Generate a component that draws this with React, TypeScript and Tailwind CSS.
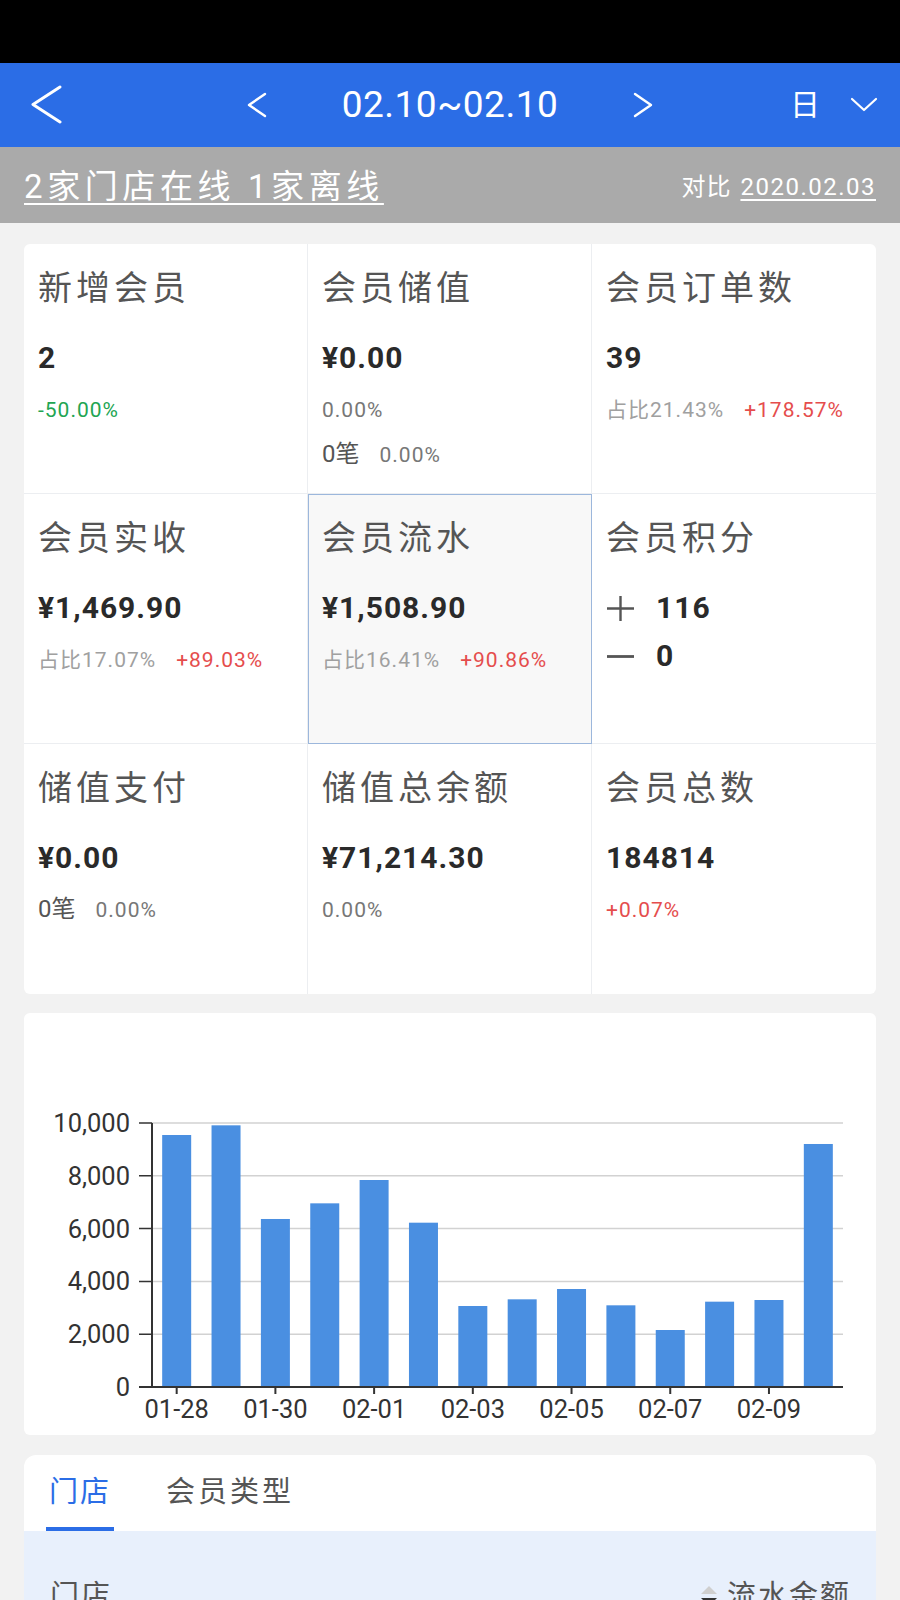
import React from "react";

const bars = [9545, 9912, 6364, 6957, 7841, 6224, 3068, 3321, 3712, 3094, 2159, 3232, 3295, 9205];
const xLabels = ["01-28", "01-30", "02-01", "02-03", "02-05", "02-07", "02-09"];

function PlusIcon() {
  return (
    <svg width="31" height="31" viewBox="0 0 31 31" className="shrink-0">
      <path d="M15.5 3 V28 M2 15.5 H29" stroke="#555" strokeWidth="2.4" fill="none" />
    </svg>
  );
}

function MinusIcon() {
  return (
    <svg width="31" height="31" viewBox="0 0 31 31" className="shrink-0">
      <path d="M2 15.5 H29" stroke="#555" strokeWidth="2.8" fill="none" />
    </svg>
  );
}

type CellProps = {
  title: string;
  value?: React.ReactNode;
  children?: React.ReactNode;
  className?: string;
};

function Cell({ title, value, children, className = "" }: CellProps) {
  return (
    <div className={`h-[250px] pt-[24px] pl-[14px] ${className}`}>
      <div className="text-[34px] leading-[40px] tracking-[4px] text-[#555]">{title}</div>
      {value !== undefined && (
        <div className="mt-[32px] text-[30px] leading-[36px] font-bold tracking-[1px] text-[#2a2a2a]">{value}</div>
      )}
      {children}
    </div>
  );
}

function Sub({ children, className = "" }: { children: React.ReactNode; className?: string }) {
  return <div className={`text-[21px] leading-[28px] tracking-[1px] ${className}`}>{children}</div>;
}

function CountLine({ count, pct, className = "" }: { count: string; pct: string; className?: string }) {
  return (
    <div className={`leading-[32px] flex items-baseline ${className}`}>
      <span className="text-[24px] text-[#555]">{count}</span>
      <span className="ml-[20px] text-[21px] tracking-[1px] text-[#777]">{pct}</span>
    </div>
  );
}

function Chart() {
  const x0 = 128;
  const x1 = 819;
  const yBase = 374;
  const yTop = 110;
  const step = (x1 - x0) / bars.length;
  const barW = 29;
  const yOf = (v: number) => yBase - (v / 10000) * (yBase - yTop);
  const ticks = [0, 2000, 4000, 6000, 8000, 10000];
  return (
    <svg width="852" height="422" viewBox="0 0 852 422" className="block">
      {ticks.map((t) => (
        <g key={t}>
          {t !== 0 && <line x1={x0} x2={x1} y1={yOf(t)} y2={yOf(t)} stroke="#d2d2d2" strokeWidth="1.5" />}
          <line x1={115} x2={x0} y1={yOf(t)} y2={yOf(t)} stroke="#333" strokeWidth="1.5" />
          <text
            x={106}
            y={yOf(t) + 9}
            textAnchor="end"
            fontSize="25.5"
            fill="#333"
            fontFamily="Roboto, 'Liberation Sans', sans-serif"
          >
            {t.toLocaleString("en-US")}
          </text>
        </g>
      ))}
      {bars.map((v, i) => {
        const cx = x0 + step * (i + 0.5);
        return <rect key={i} x={cx - barW / 2} y={yOf(v)} width={barW} height={yBase - yOf(v)} fill="#4a8fe1" />;
      })}
      <line x1={x0} x2={x0} y1={yTop} y2={yBase} stroke="#333" strokeWidth="2" />
      <line x1={115} x2={x1} y1={yBase} y2={yBase} stroke="#333" strokeWidth="2" />
      {xLabels.map((l, k) => {
        const cx = x0 + step * (k * 2 + 0.5);
        return (
          <g key={l}>
            <line x1={cx} x2={cx} y1={yBase} y2={yBase + 7} stroke="#333" strokeWidth="2" />
            <text
              x={cx}
              y={405}
              textAnchor="middle"
              fontSize="25.5"
              fill="#333"
              fontFamily="Roboto, 'Liberation Sans', sans-serif"
            >
              {l}
            </text>
          </g>
        );
      })}
    </svg>
  );
}

export default function App() {
  return (
    <div className="min-h-screen bg-[#f2f2f2] font-[Roboto,'Noto_Sans_CJK_SC',sans-serif]">
      <div className="h-[63px] bg-black" />

      <header className="h-[84px] bg-[#2b6de6] flex items-center text-white">
        <svg width="32" height="40" viewBox="0 0 32 40" className="ml-[31px] shrink-0">
          <path d="M29 2 L2 19.5 L29 37" fill="none" stroke="white" strokeWidth="3" strokeLinecap="round" strokeLinejoin="round" />
        </svg>
        <div className="ml-[183px] flex items-center">
          <svg width="22" height="30" viewBox="0 0 22 30" className="shrink-0">
            <path d="M19 4 L3 15 L19 26" fill="none" stroke="white" strokeWidth="2.4" strokeLinecap="round" strokeLinejoin="round" />
          </svg>
          <div className="w-[364px] text-center text-[37px] leading-[44px] tracking-[0.5px]">02.10~02.10</div>
          <svg width="22" height="30" viewBox="0 0 22 30" className="shrink-0">
            <path d="M3 4 L19 15 L3 26" fill="none" stroke="white" strokeWidth="2.4" strokeLinecap="round" strokeLinejoin="round" />
          </svg>
        </div>
        <div className="ml-[136px] text-[30px] leading-[36px]">日</div>
        <svg width="30" height="20" viewBox="0 0 30 20" className="ml-[29px] shrink-0">
          <path d="M3 4 L15 15 L27 4" fill="none" stroke="white" strokeWidth="2.2" strokeLinecap="round" strokeLinejoin="round" />
        </svg>
      </header>

      <div className="h-[76px] bg-[#aaaaaa] px-[24px] pt-[4px] flex items-center justify-between text-white">
        <span className="text-[33px] leading-[40px] tracking-[4.6px] underline underline-offset-[5px] decoration-[2px]">
          2家门店在线 1家离线
        </span>
        <span className="text-[24px] leading-[30px] tracking-[1px]">
          对比{" "}
          <span className="ml-[2px] underline underline-offset-[4px] decoration-[1.5px] tracking-[1.5px]">2020.02.03</span>
        </span>
      </div>

      <main className="px-[24px] pt-[21px] pb-[40px]">
        <section className="bg-white rounded-[6px] grid grid-cols-3 overflow-hidden">
          <Cell title="新增会员" value="2" className="border-r border-b border-[#eceef1]">
            <Sub className="mt-[20px] text-[#22a552]">-50.00%</Sub>
          </Cell>
          <Cell title="会员储值" value="¥0.00" className="border-r border-b border-[#eceef1]">
            <Sub className="mt-[20px] text-[#777]">0.00%</Sub>
            <CountLine count="0笔" pct="0.00%" className="mt-[14px]" />
          </Cell>
          <Cell title="会员订单数" value="39" className="border-b border-[#eceef1]">
            <Sub className="mt-[20px]">
              <span className="text-[#a0a0a0]">占比21.43%</span>
              <span className="ml-[20px] text-[#e54d4d]">+178.57%</span>
            </Sub>
          </Cell>

          <Cell title="会员实收" value="¥1,469.90" className="border-r border-b border-[#eceef1]">
            <Sub className="mt-[20px]">
              <span className="text-[#a0a0a0]">占比17.07%</span>
              <span className="ml-[20px] text-[#e54d4d]">+89.03%</span>
            </Sub>
          </Cell>
          <Cell
            title="会员流水"
            value="¥1,508.90"
            className="bg-[#f8f8f8] shadow-[inset_0_0_0_1px_#9cb7dc]"
          >
            <Sub className="mt-[20px]">
              <span className="text-[#a0a0a0]">占比16.41%</span>
              <span className="ml-[20px] text-[#e54d4d]">+90.86%</span>
            </Sub>
          </Cell>
          <Cell title="会员积分" className="border-b border-[#eceef1]">
            <div className="mt-[32px] h-[36px] flex items-center gap-[20px] -ml-[1px]">
              <PlusIcon />
              <span className="text-[30px] leading-[36px] font-bold tracking-[1px] text-[#2a2a2a]">116</span>
            </div>
            <div className="mt-[12px] h-[36px] flex items-center gap-[20px] -ml-[1px]">
              <MinusIcon />
              <span className="text-[30px] leading-[36px] font-bold text-[#2a2a2a]">0</span>
            </div>
          </Cell>

          <Cell title="储值支付" value="¥0.00" className="border-r border-[#eceef1]">
            <CountLine count="0笔" pct="0.00%" className="mt-[17px]" />
          </Cell>
          <Cell title="储值总余额" value="¥71,214.30" className="border-r border-[#eceef1]">
            <Sub className="mt-[20px] text-[#777]">0.00%</Sub>
          </Cell>
          <Cell title="会员总数" value="184814">
            <Sub className="mt-[20px] text-[#e54d4d]">+0.07%</Sub>
          </Cell>
        </section>

        <section className="mt-[19px] bg-white rounded-[6px] h-[422px] overflow-hidden">
          <Chart />
        </section>

        <section className="mt-[20px] bg-white rounded-t-[12px] overflow-hidden">
          <div className="h-[76px] flex items-stretch pl-[22px]">
            <div className="w-[68px] pt-[4px] flex items-center justify-center border-b-4 border-[#2b6de6] text-[29px] tracking-[2px] text-[#2b6de6]">
              门店
            </div>
            <div className="ml-[52px] flex items-center text-[29px] tracking-[3px] text-[#555]">会员类型</div>
          </div>
          <div className="h-[200px] bg-[#e8f0fc] pl-[26px] pr-[25px] pt-[47px] flex items-start justify-between text-[29px] leading-[36px] tracking-[2px] text-[#555]">
            <span>门店</span>
            <span className="flex items-center">
              <span className="mr-[10px] flex flex-col items-center gap-[4px]">
                <span className="block w-0 h-0 border-x-[8px] border-x-transparent border-b-[8px] border-b-[#cfcfcf]" />
                <span className="block w-0 h-0 border-x-[8px] border-x-transparent border-t-[8px] border-t-[#333]" />
              </span>
              流水金额
            </span>
          </div>
        </section>
      </main>
    </div>
  );
}
